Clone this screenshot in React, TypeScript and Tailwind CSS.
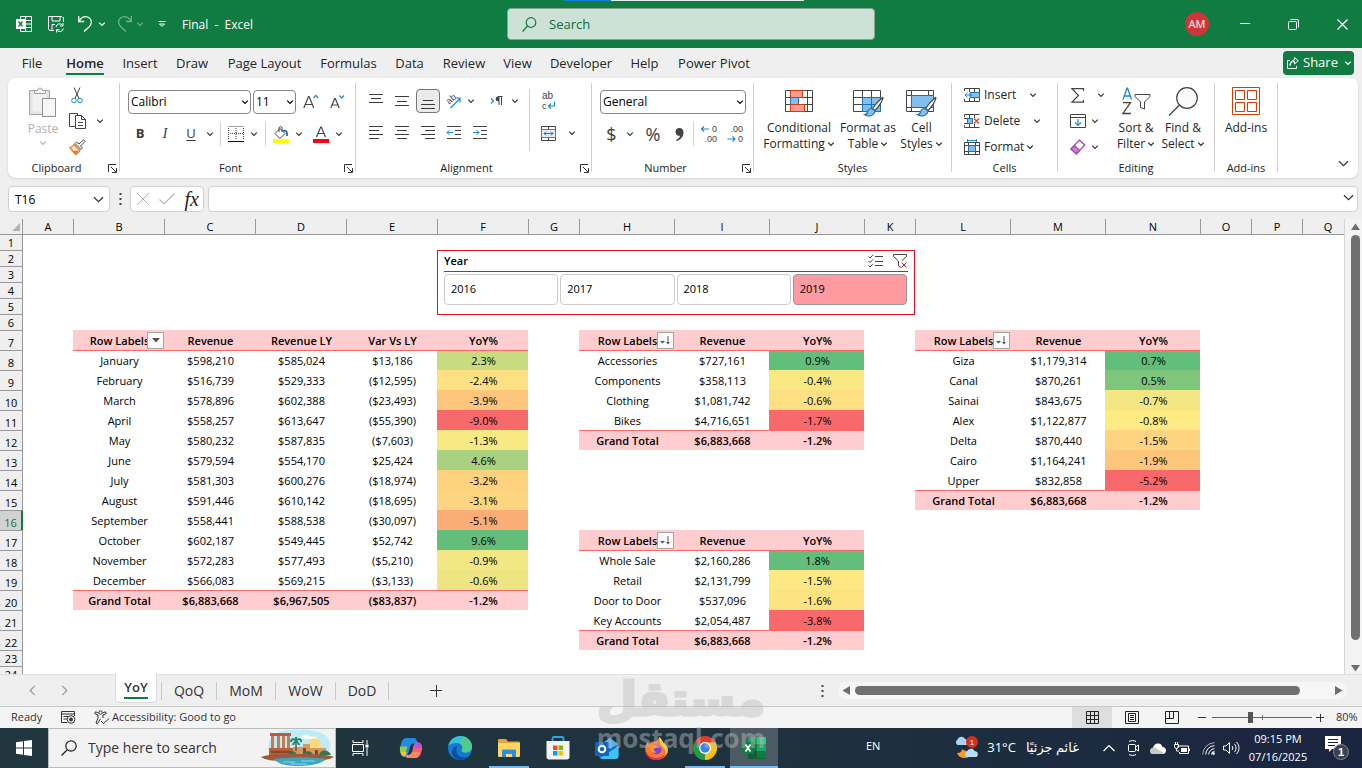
import { ReactNode, useState } from "react";

/* ---------- sheet data ---------- */

type Row = [string, ...string[]];

type Pivot = {
  col: number;
  row: number;
  sorted: boolean;
  head: string[];
  rows: Row[];
  total: string[];
  colors: string[];
};

const COLUMNS = [
  { name: "A", width: 50 },
  { name: "B", width: 91 },
  { name: "C", width: 91 },
  { name: "D", width: 91 },
  { name: "E", width: 91 },
  { name: "F", width: 91 },
  { name: "G", width: 51 },
  { name: "H", width: 95 },
  { name: "I", width: 95 },
  { name: "J", width: 95 },
  { name: "K", width: 51 },
  { name: "L", width: 95 },
  { name: "M", width: 95 },
  { name: "N", width: 95 },
  { name: "O", width: 51 },
  { name: "P", width: 51 },
  { name: "Q", width: 51 },
];

const PIVOTS: Pivot[] = [
  {
    col: 1,
    row: 7,
    sorted: false,
    head: ["Row Labels", "Revenue", "Revenue LY", "Var Vs LY", "YoY%"],
    rows: [
      ["January", "$598,210", "$585,024", "$13,186", "2.3%"],
      ["February", "$516,739", "$529,333", "($12,595)", "-2.4%"],
      ["March", "$578,896", "$602,388", "($23,493)", "-3.9%"],
      ["April", "$558,257", "$613,647", "($55,390)", "-9.0%"],
      ["May", "$580,232", "$587,835", "($7,603)", "-1.3%"],
      ["June", "$579,594", "$554,170", "$25,424", "4.6%"],
      ["July", "$581,303", "$600,276", "($18,974)", "-3.2%"],
      ["August", "$591,446", "$610,142", "($18,695)", "-3.1%"],
      ["September", "$558,441", "$588,538", "($30,097)", "-5.1%"],
      ["October", "$602,187", "$549,445", "$52,742", "9.6%"],
      ["November", "$572,283", "$577,493", "($5,210)", "-0.9%"],
      ["December", "$566,083", "$569,215", "($3,133)", "-0.6%"],
    ],
    total: ["Grand Total", "$6,883,668", "$6,967,505", "($83,837)", "-1.2%"],
    colors: [
      "bg-[#c8db80]",
      "bg-[#fee082]",
      "bg-[#fdc67c]",
      "bg-[#f8696b]",
      "bg-[#f8e983]",
      "bg-[#a8d27f]",
      "bg-[#fdd27f]",
      "bg-[#fdd47f]",
      "bg-[#fbad77]",
      "bg-[#63be7b]",
      "bg-[#f2e783]",
      "bg-[#ece582]",
    ],
  },
  {
    col: 7,
    row: 7,
    sorted: true,
    head: ["Row Labels", "Revenue", "YoY%"],
    rows: [
      ["Accessories", "$727,161", "0.9%"],
      ["Components", "$358,113", "-0.4%"],
      ["Clothing", "$1,081,742", "-0.6%"],
      ["Bikes", "$4,716,651", "-1.7%"],
    ],
    total: ["Grand Total", "$6,883,668", "-1.2%"],
    colors: ["bg-[#63be7b]", "bg-[#f8e983]", "bg-[#fee082]", "bg-[#f8696b]"],
  },
  {
    col: 7,
    row: 17,
    sorted: true,
    head: ["Row Labels", "Revenue", "YoY%"],
    rows: [
      ["Whole Sale", "$2,160,286", "1.8%"],
      ["Retail", "$2,131,799", "-1.5%"],
      ["Door to Door", "$537,096", "-1.6%"],
      ["Key Accounts", "$2,054,487", "-3.8%"],
    ],
    total: ["Grand Total", "$6,883,668", "-1.2%"],
    colors: ["bg-[#63be7b]", "bg-[#fde883]", "bg-[#fee382]", "bg-[#f8696b]"],
  },
  {
    col: 11,
    row: 7,
    sorted: true,
    head: ["Row Labels", "Revenue", "YoY%"],
    rows: [
      ["Giza", "$1,179,314", "0.7%"],
      ["Canal", "$870,261", "0.5%"],
      ["Sainai", "$843,675", "-0.7%"],
      ["Alex", "$1,122,877", "-0.8%"],
      ["Delta", "$870,440", "-1.5%"],
      ["Cairo", "$1,164,241", "-1.9%"],
      ["Upper", "$832,858", "-5.2%"],
    ],
    total: ["Grand Total", "$6,883,668", "-1.2%"],
    colors: [
      "bg-[#63be7b]",
      "bg-[#7fc67d]",
      "bg-[#f2e783]",
      "bg-[#ffeb84]",
      "bg-[#fdd47f]",
      "bg-[#fdc67c]",
      "bg-[#f8696b]",
    ],
  },
];

/* ---------- small shared pieces ---------- */

function Chevron({ className = "", size = 8 }: { className?: string; size?: number }) {
  return (
    <svg width={size} height={size} viewBox="0 0 8 8" fill="none" stroke="currentColor" className={className}>
      <path d="M1.2 2.6 4 5.4 6.8 2.6" strokeWidth="1.2" vectorEffect="non-scaling-stroke" />
    </svg>
  );
}

function Drop({ label, className = "w-3.5" }: { label: string; className?: string }) {
  return (
    <button aria-label={label} className={`h-6 flex items-center justify-center text-[#333] ${className}`}>
      <Chevron />
    </button>
  );
}

function Tool({ label, className = "w-[26px]", children }: { label: string; className?: string; children: ReactNode }) {
  return (
    <button aria-label={label} className={`h-6 flex items-center justify-center text-[#3b3b3b] ${className}`}>
      {children}
    </button>
  );
}

function Group({
  label,
  className,
  launcher = false,
  children,
}: {
  label: string;
  className: string;
  launcher?: boolean;
  children: ReactNode;
}) {
  return (
    <>
      <section aria-label={label} className={`shrink-0 flex flex-col ${className}`}>
        <div className="h-[77px] flex">{children}</div>
        <div className="h-4 flex items-center">
          <span className="flex-1 text-center text-[11px] leading-4 text-[#222]">{label}</span>
          {launcher && (
            <button aria-label={`${label} settings`} className="w-3.5 flex justify-center">
              <svg width="9" height="9" viewBox="0 0 9 9" fill="none" stroke="#333">
                <path d="M.5 8V.5H8M3 3l5 5M8.5 4v4.5H4" />
              </svg>
            </button>
          )}
        </div>
      </section>
      <div className="w-px h-[89px] bg-[#d1d1d1] shrink-0" />
    </>
  );
}

function Lines({ y, x1, x2 }: { y: number[]; x1: number[]; x2: number[] }) {
  return (
    <svg width="16" height="16" viewBox="0 0 16 16" stroke="#3b3b3b" fill="none">
      {y.map((v, i) => (
        <path key={v} d={`M${x1[i]} ${v}H${x2[i]}`} />
      ))}
    </svg>
  );
}

function Combo({ label, value, className }: { label: string; value: string; className: string }) {
  return (
    <div className={`relative h-6 flex items-center ${className}`}>
      <select
        aria-label={label}
        defaultValue={value}
        className="appearance-none w-full h-6 pl-0.5 border border-[#868686] rounded-sm bg-white text-xs text-black"
      >
        <option>{value}</option>
      </select>
      <Chevron className="absolute right-0.5 pointer-events-none" />
    </div>
  );
}

/* ---------- title bar ---------- */

function TitleBar() {
  return (
    <header className="relative h-12 shrink-0 bg-[#107c41] text-white grid grid-cols-[507px_368px_1fr] items-center">
      <div className="absolute top-0 left-[563px] flex h-px">
        <div className="w-12 bg-[#0f7fd8]" />
        <div className="w-[193px] bg-[#dff0e6]" />
      </div>
      <div className="flex items-center pl-4">
        <svg width="16" height="16" viewBox="0 0 16 16" fill="none" stroke="#fff">
          <path d="M4.500 3V.5h11v15h-11V13M9.500.5v15M4.500 4.500h11M9.500 8h6M4.500 11.500h11" />
          <path d="M0 3h9v10H0z" fill="#fff" stroke="none" />
          <path d="m2.500 5.500 4 5M6.500 5.500l-4 5" stroke="#107c41" strokeWidth="1.400" />
        </svg>
        <button aria-label="Save" className="ml-4">
          <svg width="16" height="17" viewBox="0 0 16 17" fill="none" stroke="#fff">
            <path d="M15.500 6V1.500h-1l-1-1H.5v13l1.500 1h4M4 .5v4.500h8V.5M4 14V8.500h3" />
            <path d="M8 11a3.700 3.700 0 0 1 6.800-1.500M15 7v3h-3M15.400 12.500A3.700 3.700 0 0 1 8.700 14M8.500 16.500v-3h3" />
          </svg>
        </button>
        <button aria-label="Undo" className="ml-3.5">
          <svg width="14" height="18" viewBox="0 0 14 18" fill="none" stroke="#fff" strokeWidth="1.300">
            <path d="M.7 1v5.500h5.500M1 6.200C3 3 5.500 1.500 8 1.700c3.500.2 5.500 3 5.300 6-.2 2-1 3-2.300 4.300L6 16.500" />
          </svg>
        </button>
        <button aria-label="Undo list" className="ml-1.5">
          <Chevron />
        </button>
        <button aria-label="Redo" className="ml-3 opacity-40">
          <svg width="14" height="18" viewBox="0 0 14 18" fill="none" stroke="#fff" strokeWidth="1.300">
            <path d="M13.300 1v5.500H7.800M13 6.200C11 3 8.500 1.500 6 1.700c-3.500.2-5.500 3-5.300 6 .2 2 1 3 2.300 4.300l5 4.500" />
          </svg>
        </button>
        <button aria-label="Redo list" className="ml-1 opacity-40">
          <Chevron />
        </button>
        <button aria-label="Customize toolbar" className="ml-3.5">
          <svg width="8" height="8" viewBox="0 0 8 8" fill="none" stroke="#fff">
            <path d="M.5 1.500h7M1.500 4 4 6.500 6.500 4z" />
          </svg>
        </button>
        <h1 className="ml-4 pt-0.5 text-xs whitespace-pre">Final  -  Excel</h1>
      </div>
      <label className="h-8 flex items-center gap-3 px-3.5 rounded-sm border border-[#8aa396] bg-[#cde2d7]">
        <svg width="15" height="15" viewBox="0 0 15 15" fill="none" stroke="#107c41" strokeWidth="1.200">
          <circle cx="9" cy="5.500" r="4.800" />
          <path d="M5.500 9 .5 14.500" />
        </svg>
        <input
          aria-label="Search"
          placeholder="Search"
          className="flex-1 pt-0.5 bg-transparent outline-none text-[13px] text-[#0f6b39] placeholder:text-[#0f6b39]"
        />
      </label>
      <div className="flex items-center justify-end pr-3.5">
        <button className="w-6 h-6 rounded-full bg-[#d13438] text-[11px] leading-6 mr-3">AM</button>
        <button aria-label="Minimize" className="w-12 flex justify-center mr-1">
          <svg width="10" height="10" viewBox="0 0 10 10" stroke="#fff">
            <path d="M0 4.500h10" />
          </svg>
        </button>
        <button aria-label="Restore" className="w-10 flex justify-center">
          <svg width="11" height="11" viewBox="0 0 11 11" fill="none" stroke="#fff">
            <rect x=".5" y="2.500" width="8" height="8" rx="1" />
            <path d="M2.500.5H9A1.500 1.500 0 0 1 10.500 2v6.500" />
          </svg>
        </button>
        <button aria-label="Close" className="ml-6">
          <svg width="11" height="11" viewBox="0 0 11 11" stroke="#fff" strokeWidth="1.200">
            <path d="m.5.5 10 10M10.500.5l-10 10" />
          </svg>
        </button>
      </div>
    </header>
  );
}

/* ---------- ribbon ---------- */

const MENU = [
  { name: "File", className: "w-[46px]" },
  { name: "Home", className: "w-[60px]" },
  { name: "Insert", className: "w-[50px]" },
  { name: "Draw", className: "w-[54px]" },
  { name: "Page Layout", className: "w-[91px]" },
  { name: "Formulas", className: "w-[77px]" },
  { name: "Data", className: "w-[45px]" },
  { name: "Review", className: "w-16" },
  { name: "View", className: "w-[43px]" },
  { name: "Developer", className: "w-[84px]" },
  { name: "Help", className: "w-[43px]" },
  { name: "Power Pivot", className: "w-24" },
];

function MenuBar() {
  return (
    <nav className="h-[30px] shrink-0 flex items-center pl-[9px] pr-2">
      {MENU.map((m) => (
        <button key={m.name} className={`h-[30px] flex justify-center text-[13px] text-[#262626] ${m.className}`}>
          <span
            className={
              m.name === "Home"
                ? "h-[27px] pt-[5px] leading-5 font-semibold border-b-2 border-[#107c41]"
                : "h-[27px] pt-[5px] leading-5"
            }
          >
            {m.name}
          </span>
        </button>
      ))}
      <button className="ml-auto h-6 w-[71px] pl-1 rounded bg-[#107c41] text-white text-[13px] flex items-center gap-1">
        <svg width="12" height="12" viewBox="0 0 12 12" fill="none" stroke="#fff">
          <path d="M3 3.500H.5v8h9V9M3 8.500c.3-2.500 2-4 4.500-4V7L11.300 3.700 7.500.7V3C4.500 3.200 3 5.500 3 8.500z" />
        </svg>
        Share
        <Chevron className="ml-0.5" />
      </button>
    </nav>
  );
}

function Brush() {
  return (
    <g>
      <path d="M29.500 7.500c-2.500 2-8 8-10 11l2.500 2c3-3 7-9 8-12.500z" fill="#fff" stroke="#444" strokeWidth="1.100" />
      <path d="M19 18.500c-2.500-.3-4 1.500-4.500 3.500-.4 1.700-1.500 2.500-3 2.500 3.500 2.500 9.500 2 10.500-3.500z" fill="#83beec" stroke="#1e6fb8" strokeWidth="1.100" />
    </g>
  );
}

function BigButton({ lines, drop = true, className, children }: { lines: string[]; drop?: boolean; className: string; children: ReactNode }) {
  return (
    <button className={`flex flex-col items-center pt-1 text-xs leading-4 text-[#262626] whitespace-nowrap ${className}`}>
      <span className="h-[33px] flex items-start">{children}</span>
      {lines.map((line, i) => (
        <span key={line} className="flex items-center gap-0.5">
          {line}
          {drop && i === lines.length - 1 && <Chevron />}
        </span>
      ))}
    </button>
  );
}

function Ribbon() {
  return (
    <div className="ml-2 mr-1 h-[100px] shrink-0 pt-[5px] bg-white rounded-lg shadow flex overflow-hidden">
      <Group label="Clipboard" className="w-[111px]" launcher>
        <button className="ml-5 w-[30px] flex flex-col items-center pt-1 text-xs leading-4 text-[#b1b1b1]">
          <svg width="28" height="30" viewBox="0 0 28 30" fill="#f1f1f1" stroke="#a6a6a6" className="shrink-0">
            <path d="M.5 3.500h20v24H.5z" fill="#e3e3e3" />
            <path d="M3.500 6.500h14v18h-14z" stroke="none" />
            <path d="M5.500 6.500v-3h3a2.500 2.500 0 0 1 5 0h3v3z" />
            <path d="M13.500 11.500h13v18h-13z" fill="#f7f7f7" stroke="#8f8f8f" />
          </svg>
          <span className="mt-1">Paste</span>
          <Chevron className="mt-0.5" />
        </button>
        <div className="flex flex-col gap-0.5 ml-1.5">
          <Tool label="Cut">
            <svg width="12" height="17" viewBox="0 0 12 17" fill="none">
              <path d="m3 .5 5 11M9 .5l-5 11" stroke="#444" />
              <circle cx="3" cy="13.500" r="2.300" stroke="#1e88d8" />
              <circle cx="9" cy="13.500" r="2.300" stroke="#1e88d8" />
            </svg>
          </Tool>
          <div className="flex">
            <Tool label="Copy">
              <svg width="17" height="16" viewBox="0 0 17 16" fill="none" stroke="#444">
                <path d="M6 13.500H.5V.5h8v2" />
                <path d="M6.500 2.500h6l4 4v9h-10zM12.500 2.500v4h4M9 9.500h5M9 12.500h5" fill="#fff" />
              </svg>
            </Tool>
            <Drop label="Copy list" className="w-5" />
          </div>
          <Tool label="Format Painter">
            <svg width="17" height="16" viewBox="0 0 17 16" fill="none">
              <path d="m5 5.500 6 6c-1 2-2.500 3-4.500 4L.8 8.500C2.500 8 4 7 5 5.500z" fill="#fbe3cf" stroke="#e07a1f" strokeWidth="1.200" />
              <path d="M4 12 10 11.500l-3.500 3.700z" fill="#e07a1f" />
              <path d="m6 4.500 6 6 1.500-1.500-2-2 4.500-4.500-1.500-1.700L10 5 7.500 3z" fill="#fff" stroke="#444" />
            </svg>
          </Tool>
        </div>
      </Group>

      <Group label="Font" className="w-[235px]" launcher>
        <div className="flex flex-col gap-2 pl-2 pt-[7px]">
          <div className="flex">
            <Combo label="Font name" value="Calibri" className="w-[123px] mr-0.5" />
            <Combo label="Font size" value="11" className="w-[43px] mr-0.5" />
            <Tool label="Increase font size">
              <svg width="16" height="16" viewBox="0 0 16 16" fill="none">
                <path d="M.8 14 5.500 2.500h.6L10.800 14M2.500 10.500h6.700" stroke="#444" strokeWidth="1.200" />
                <path d="m10.500 4 2.200-2.500L15 4" stroke="#1e88d8" strokeWidth="1.200" />
              </svg>
            </Tool>
            <Tool label="Decrease font size">
              <svg width="16" height="16" viewBox="0 0 16 16" fill="none">
                <path d="M1.800 14 5.700 4.500h.6L10.200 14M3 11h6" stroke="#444" strokeWidth="1.200" />
                <path d="m10.500 1.500 2.200 2.500L15 1.500" stroke="#1e88d8" strokeWidth="1.200" />
              </svg>
            </Tool>
          </div>
          <div className="flex items-center">
            <Tool label="Bold" className="w-6">
              <b className="text-[13px]">B</b>
            </Tool>
            <Tool label="Italic">
              <i className="text-sm font-['Liberation_Serif',serif]">I</i>
            </Tool>
            <Tool label="Underline">
              <u className="text-[13px] underline-offset-2">U</u>
            </Tool>
            <Drop label="Underline styles" className="w-3" />
            <div className="w-px h-6 mx-1 bg-[#d1d1d1]" />
            <Tool label="Borders" className="w-[22px]">
              <svg width="16" height="16" viewBox="0 0 16 16" stroke="#444" fill="none">
                <path d="M.5.5h15M.5 2v12M15.500 2v12M8 2v12M2 7.500h13" strokeDasharray="1 1" />
                <path d="M0 15.500h16" stroke="#111" />
              </svg>
            </Tool>
            <Drop label="Border styles" />
            <div className="w-px h-6 mx-1 bg-[#d1d1d1]" />
            <Tool label="Fill color" className="w-[22px]">
              <svg width="16" height="17" viewBox="0 0 16 17" fill="none">
                <path d="m7 2.500 5 5-5 5-5-5z" stroke="#444" />
                <path d="M6 6V2.200a1.500 1.500 0 0 1 3 0V6" stroke="#444" />
                <path d="M10 5c3-1 4.500.5 4 5" stroke="#1e6fb8" strokeWidth="1.800" />
                <path d="M0 13h16v4H0z" fill="#ff0" />
              </svg>
            </Tool>
            <Drop label="Fill colors" />
            <Tool label="Font color" className="w-[22px] ml-1">
              <svg width="16" height="17" viewBox="0 0 16 17" fill="none">
                <path d="M3.500 11 7.700 1h.6l4.200 10M5 7.500h6" stroke="#444" strokeWidth="1.200" />
                <path d="M0 13h16v4H0z" fill="#fb0013" />
              </svg>
            </Tool>
            <Drop label="Font colors" />
          </div>
        </div>
      </Group>

      <Group label="Alignment" className="w-[235px]" launcher>
        <div className="w-[173px] flex flex-col gap-2 pl-[7px] pt-1.5">
          <div className="flex">
            <Tool label="Top align">
              <Lines y={[1.5, 5.5, 9.5]} x1={[1, 3, 1]} x2={[15, 13, 15]} />
            </Tool>
            <Tool label="Middle align">
              <Lines y={[3.5, 8.5, 12.5]} x1={[1, 3, 1]} x2={[15, 13, 15]} />
            </Tool>
            <Tool label="Bottom align" className="w-6 mx-px rounded border border-[#767676] bg-[#ebebeb]">
              <Lines y={[7.5, 11.5, 15.5]} x1={[3, 1, 1]} x2={[13, 15, 15]} />
            </Tool>
            <Tool label="Orientation" className="w-6">
              <svg width="20" height="20" viewBox="0 0 20 20" fill="none" fontFamily="Liberation Sans, sans-serif">
                <text x="3" y="11" fontSize="9" fill="#444" transform="rotate(-40 8 8)">
                  ab
                </text>
                <path d="M7.500 17 17 7.500M12.500 7H17v4.500" stroke="#1e88d8" strokeWidth="1.200" />
              </svg>
            </Tool>
            <Drop label="Orientations" className="w-3" />
            <Tool label="Text direction" className="w-[22px] ml-2">
              <svg width="13" height="12" viewBox="0 0 13 12" fill="none">
                <path d="m1 3.500 2.500 2.500L1 8.500" stroke="#1e88d8" strokeWidth="1.300" />
                <path d="M9 1.500H8a2.300 2.300 0 0 0 0 4.800h1z" fill="#444" />
                <path d="M8 1.500h4.500M9 1.500V10M11.500 1.500V10" stroke="#444" />
              </svg>
            </Tool>
            <Drop label="Text directions" className="w-4" />
          </div>
          <div className="flex">
            <Tool label="Align left">
              <Lines y={[1.5, 5.5, 9.5, 13.5]} x1={[1, 1, 1, 1]} x2={[15, 11, 15, 11]} />
            </Tool>
            <Tool label="Center">
              <Lines y={[1.5, 5.5, 9.5, 13.5]} x1={[1, 3, 1, 3]} x2={[15, 13, 15, 13]} />
            </Tool>
            <Tool label="Align right">
              <Lines y={[1.5, 5.5, 9.5, 13.5]} x1={[1, 5, 1, 5]} x2={[15, 15, 15, 15]} />
            </Tool>
            <Tool label="Decrease indent">
              <svg width="16" height="16" viewBox="0 0 16 16" fill="none" stroke="#444">
                <path d="M1 1.500h14M9 5.500h6M9 9.500h6M1 13.500h14" />
                <path d="M7 7.500H1M3.500 5 1 7.500 3.500 10" stroke="#1e88d8" />
              </svg>
            </Tool>
            <Tool label="Increase indent">
              <svg width="16" height="16" viewBox="0 0 16 16" fill="none" stroke="#444">
                <path d="M1 1.500h14M9 5.500h6M9 9.500h6M1 13.500h14" />
                <path d="M1 7.500h6M4.500 5 7 7.500 4.500 10" stroke="#1e88d8" />
              </svg>
            </Tool>
          </div>
        </div>
        <div className="w-px h-[62px] mt-1.5 bg-[#d1d1d1]" />
        <div className="flex flex-col gap-2 pl-1.5 pt-1.5">
          <Tool label="Wrap text">
            <svg width="16" height="22" viewBox="0 0 16 22" fill="none" fontFamily="Liberation Sans, sans-serif">
              <text x="1" y="9" fontSize="10" fill="#444">
                ab
              </text>
              <text x="1" y="19" fontSize="9" fill="#444">
                c
              </text>
              <path d="M13.500 11.500v4.500H7.500M10 13.500 7.500 16l2.500 2.500" stroke="#1e88d8" strokeWidth="1.200" />
            </svg>
          </Tool>
          <div className="flex">
            <Tool label="Merge and center" className="w-6">
              <svg width="15" height="15" viewBox="0 0 15 15" fill="none" stroke="#444">
                <path d="M.5.5h14v14H.5zM7.500.5v3M7.500 11.500v3" />
                <path d="M.5 3.500h14v8H.5z" fill="#e4f1fb" stroke="#1e88d8" />
                <path d="M3 7.500h9M5 5.500l-2 2 2 2M10 5.500l2 2-2 2" stroke="#1e6fb8" />
              </svg>
            </Tool>
            <Drop label="Merge list" className="w-6" />
          </div>
        </div>
      </Group>

      <Group label="Number" className="w-[161px]" launcher>
        <div className="flex flex-col gap-2 pl-2 pt-[7px]">
          <Combo label="Number format" value="General" className="w-[146px]" />
          <div className="flex items-center">
            <Tool label="Currency" className="w-[23px] text-lg">
              $
            </Tool>
            <Drop label="Currencies" />
            <Tool label="Percent" className="w-8 text-lg">
              %
            </Tool>
            <Tool label="Comma style" className="w-5">
              <svg width="9" height="13" viewBox="0 0 9 13">
                <path d="M4.500 0a4 4 0 0 1 4 4.200C8.500 8.500 6 11.500 1.500 13L1 12c2.500-1.200 3.800-2.800 4-4.300A3.800 3.800 0 0 1 .5 4 4 4 0 0 1 4.500 0z" fill="#444" />
              </svg>
            </Tool>
            <div className="w-px h-6 ml-1 mr-1 bg-[#d1d1d1]" />
            <Tool label="Increase decimal" className="w-[22px]">
              <svg width="18" height="22" viewBox="0 0 18 22" fill="none" fontFamily="Liberation Sans, sans-serif">
                <text x="17" y="9" fontSize="9" fill="#444" textAnchor="end">
                  0
                </text>
                <text x="17" y="19" fontSize="9" fill="#444" textAnchor="end">
                  .00
                </text>
                <path d="M9 6H1.500M4 3.500 1.500 6 4 8.500" stroke="#1e88d8" strokeWidth="1.200" />
              </svg>
            </Tool>
            <Tool label="Decrease decimal" className="w-[22px] ml-1">
              <svg width="18" height="22" viewBox="0 0 18 22" fill="none" fontFamily="Liberation Sans, sans-serif">
                <text x="17" y="9" fontSize="9" fill="#444" textAnchor="end">
                  .00
                </text>
                <text x="17" y="19" fontSize="9" fill="#444" textAnchor="end">
                  0
                </text>
                <path d="M1.500 16H9M6.500 13.500 9 16l-2.500 2.500" stroke="#1e88d8" strokeWidth="1.200" />
              </svg>
            </Tool>
          </div>
        </div>
      </Group>

      <Group label="Styles" className="w-[197px]">
        <BigButton lines={["Conditional", "Formatting"]} className="w-[90px]">
          <svg width="28" height="25" viewBox="0 0 28 25" fill="none" stroke="#444" className="mt-[3px]">
            <path d="M.5.5h27v21H.5zM.5 7.500h27M.5 14.500h27M5.500.5v21M22.500.5v21" />
            <path d="M5.500.5h12v7h-12z" fill="#ff9a98" stroke="#d83b01" />
            <path d="M5.500 7.500h8v7h-8z" fill="#83beec" stroke="#1e6fb8" />
            <path d="M5.500 14.500h14v7h-14z" fill="#ff9a98" stroke="#d83b01" />
          </svg>
        </BigButton>
        <BigButton lines={["Format as", "Table"]} className="w-12">
          <svg width="31" height="30" viewBox="0 0 31 30" fill="none" stroke="#444" className="mt-[3px]">
            <path d="M.5.5h27v21H.5zM.5 7.500h27M.5 14.500h27M9.500.5v21M18.500.5v21" />
            <path d="M9.500 7.500h18v14h-18z" fill="#83beec" stroke="none" />
            <path d="M9.500 14.500h18M18.500 7.500v14M9.500 7.500h18v14h-18z" stroke="#1e6fb8" />
            <Brush />
          </svg>
        </BigButton>
        <BigButton lines={["Cell", "Styles"]} className="w-[59px]">
          <svg width="31" height="30" viewBox="0 0 31 30" fill="none" stroke="#444" className="mt-[3px]">
            <path d="M.5.5h27v21H.5zM.5 5.500h27M5.500.5v21M.5 17.500h27M22.500.5v21" />
            <path d="M5.500 5.500h22v12h-22z" fill="#83beec" stroke="#1e6fb8" />
            <Brush />
          </svg>
        </BigButton>
      </Group>

      <Group label="Cells" className="w-[105px]">
        <div className="flex flex-col gap-0.5 pl-3 text-xs text-[#262626]">
          <div className="flex">
            <button className="h-6 flex items-center gap-1 w-[62px]">
              <svg width="16" height="14" viewBox="0 0 16 14" fill="none" stroke="#444" className="shrink-0">
                <path d="M.5 3V.5h15v13H.5V11M5.500.5V4M10.500.5V4M5.500 10v3.500M10.500 10v3.500" />
                <path d="M6 4.500h9.500v5H6z" fill="#83beec" stroke="#1e6fb8" />
                <path d="M8 7H1M3.500 4.500 1 7l2.500 2.500" stroke="#1e88d8" />
              </svg>
              Insert
            </button>
            <Drop label="Insert list" />
          </div>
          <div className="flex">
            <button className="h-6 flex items-center gap-1 w-[66px]">
              <svg width="16" height="14" viewBox="0 0 16 14" fill="none" stroke="#444" className="shrink-0">
                <path d="M.5 3V.5h15M.5 13.500h15M.5 11v2.500M5.500.5V4M10.500.5V4M5.500 10v3.500M10.500 10v3.500M0 4.500h4M0 9.500h4" />
                <path d="M3.500 4.500h5v5h-5z" fill="#83beec" stroke="#1e6fb8" />
                <path d="m10 4.500 5 5M15 4.500l-5 5" stroke="#e03a2e" strokeWidth="1.200" />
              </svg>
              Delete
            </button>
            <Drop label="Delete list" />
          </div>
          <button className="h-6 flex items-center gap-1">
            <svg width="16" height="16" viewBox="0 0 16 16" fill="none" stroke="#444" className="shrink-0">
              <path d="M.5 3.500h15v12H.5zM4.500 3.500v12M11.500 3.500v12M.5 6.500h15M.5 12.500h15" />
              <path d="M4.500 6.500h7v6h-7z" fill="#83beec" stroke="#1e6fb8" />
              <path d="M3.500 1.500h9M3.500 0v3M12.500 0v3" stroke="#1e88d8" />
            </svg>
            <span className="-mr-1">Format</span>
            <Chevron className="ml-0.5" />
          </button>
        </div>
      </Group>

      <Group label="Editing" className="w-[156px]">
        <div className="flex flex-col gap-0.5 pl-2">
          <div className="flex">
            <Tool label="AutoSum" className="w-6">
              <svg width="14" height="15" viewBox="0 0 14 15" fill="none" stroke="#444" strokeWidth="1.200">
                <path d="M12.500 3V.7H1l6.500 6.800L1 14.200h11.500V12" />
              </svg>
            </Tool>
            <Drop label="AutoSum list" className="w-[22px]" />
          </div>
          <div className="flex">
            <Tool label="Fill" className="w-6">
              <svg width="16" height="14" viewBox="0 0 16 14" fill="none" stroke="#444">
                <path d="M.5.5h15v13H.5zM.5 3.500h15" />
                <path d="M8 5v6.500M5 8.500l3 3 3-3" stroke="#1e88d8" strokeWidth="1.200" />
              </svg>
            </Tool>
            <Drop label="Fill list" className="w-2.5" />
          </div>
          <div className="flex">
            <Tool label="Clear" className="w-6">
              <svg width="16" height="16" viewBox="0 0 16 16" fill="#fff" stroke="#a33fae" strokeWidth="1.200">
                <path d="M1 10 9.500 1.200 14.800 6l-8.500 9z" />
                <path d="M1 10l3.500-3.500 5.200 5L6.300 15z" fill="#c97fd0" />
              </svg>
            </Tool>
            <Drop label="Clear list" className="w-2.5" />
          </div>
        </div>
        <BigButton lines={["Sort &", "Filter"]} className="w-12">
          <svg width="29" height="28" viewBox="0 0 29 28" fill="none" strokeWidth="1.300">
            <path d="M1 12.500 5 1.200h.6l4 11.300M2.500 9h5.800" stroke="#1e88d8" />
            <path d="M1 15.700h7.500L1 26.500h8" stroke="#444" />
            <path d="M13 7.500h15v2L22.500 15v7l-4-1.500V15L13 9.500z" stroke="#444" strokeWidth="1" />
          </svg>
        </BigButton>
        <BigButton lines={["Find &", "Select"]} className="w-[46px]">
          <svg width="30" height="30" viewBox="0 0 30 30" fill="#fafafa" stroke="#444" strokeWidth="1.200">
            <circle cx="19" cy="11" r="10.300" />
            <path d="M11.500 18 1 28.500" />
          </svg>
        </BigButton>
      </Group>

      <Group label="Add-ins" className="w-[62px]">
        <BigButton lines={["Add-ins"]} drop={false} className="w-[62px]">
          <svg width="28" height="28" viewBox="0 0 28 28" fill="none" stroke="#d83b01">
            <path d="M.5.500h27v27H.5zM3.500 3.500h9v9h-9zM15.500 3.500h9v9h-9zM3.500 15.500h9v9h-9zM15.500 15.500h9v9h-9z" />
          </svg>
        </BigButton>
      </Group>

      <button aria-label="Collapse ribbon" className="ml-auto mr-2 mb-2 self-end text-[#333]">
        <Chevron size={13} />
      </button>
    </div>
  );
}

/* ---------- formula bar ---------- */

function FormulaBar() {
  return (
    <div className="mt-2 ml-2 mr-1 h-[26px] shrink-0 flex">
      <div className="w-[102px] flex items-center justify-between pr-1 bg-white border border-[#d1d1d1] rounded">
        <input aria-label="Name box" defaultValue="T16" className="w-20 pl-1.5 pt-0.5 outline-none text-xs" />
        <Chevron size={13} className="text-[#333]" />
      </div>
      <div className="w-5 flex items-center justify-center">
        <svg width="3" height="12" viewBox="0 0 3 12" fill="#444">
          <path d="M.5 0h2v2h-2zM.5 5h2v2h-2zM.5 10h2v2h-2z" />
        </svg>
      </div>
      <div className="w-[74px] flex items-center justify-between pl-1.5 pr-1 bg-white border border-[#d1d1d1] rounded">
        <button aria-label="Cancel">
          <svg width="12" height="12" viewBox="0 0 12 12" stroke="#b5b5b5">
            <path d="m0 0 12 12M12 0 0 12" />
          </svg>
        </button>
        <button aria-label="Enter">
          <svg width="16" height="12" viewBox="0 0 16 12" fill="none" stroke="#b5b5b5" strokeWidth="1.200">
            <path d="m.5 6.500 4.500 4.500L15.500.5" />
          </svg>
        </button>
        <button aria-label="Insert function" className="font-['Liberation_Serif',serif] italic text-xl leading-5 text-[#222]">
          fx
        </button>
      </div>
      <div className="ml-1 flex-1 flex items-center bg-white border border-[#d1d1d1] rounded">
        <input aria-label="Formula" className="flex-1 pl-2 outline-none text-xs" />
        <Chevron size={13} className="mr-0.5 mb-1 text-[#333]" />
      </div>
    </div>
  );
}

/* ---------- sheet ---------- */

function FilterButton({ sorted }: { sorted: boolean }) {
  return (
    <button aria-label="Filter rows" className="absolute right-0 top-0.5 w-[17px] h-[17px] border border-[#a6a6a6] bg-[#fafafa] flex items-center justify-center">
      {sorted ? (
        <svg width="11" height="9" viewBox="0 0 11 9" fill="#555">
          <path d="M0 5h5L2.500 7.500zM7.500 0h1v6h1.500L8 8.500 6 6h1.500z" />
        </svg>
      ) : (
        <svg width="8" height="5" viewBox="0 0 8 5" fill="#555">
          <path d="M0 0h8L4 4.500z" />
        </svg>
      )}
    </button>
  );
}

function Cell({ row, col }: { row: number; col: number }) {
  const pivot = PIVOTS.find(
    (p) => col >= p.col && col < p.col + p.head.length && row >= p.row && row <= p.row + p.rows.length + 1
  );
  if (!pivot) return <td className={row === 1 ? "border-t border-[#999]" : ""} />;

  const c = col - pivot.col;
  const r = row - pivot.row - 1;

  if (r === -1) {
    return (
      <td className="relative p-0 pl-0.5 bg-[#ffcccf] text-center font-semibold">
        {pivot.head[c]}
        {c === 0 && <FilterButton sorted={pivot.sorted} />}
      </td>
    );
  }
  if (r === pivot.rows.length) {
    return (
      <td className="p-0 pl-0.5 border-t border-[#f8696b] bg-[#ffcccf] text-center font-semibold">{pivot.total[c]}</td>
    );
  }

  const last = c === pivot.head.length - 1;
  return (
    <td className={`p-0 pl-0.5 text-center ${r === 0 ? "border-t border-[#f8696b]" : ""} ${last ? pivot.colors[r] : ""}`}>
      {pivot.rows[r][c]}
    </td>
  );
}

function Slicer() {
  const [year, setYear] = useState("2019");
  return (
    <div className="absolute left-[437px] top-[31px] w-[478px] h-[65px] px-1.5 bg-white border border-[#e81123]">
      <div className="h-[21px] flex items-center border-b border-[#e81123] text-[11px]">
        <span className="flex-1 font-semibold">Year</span>
        <button aria-label="Multi-select" className="mr-2.5">
          <svg width="15" height="14" viewBox="0 0 15 14" fill="none" stroke="#444">
            <path d="M7 2.500h8M7 7.500h8M7 11.500h8M.5 2.500 2 4 5 .8M.5 7 2 8.500 5 5.300M.5 11.500 2 13l3-3.200" />
          </svg>
        </button>
        <button aria-label="Clear filter">
          <svg width="15" height="15" viewBox="0 0 15 15" fill="none" stroke="#444">
            <path d="M8 13.500 5.500 12V7L.5 2.500v-2h13v2L9 6.500" />
            <path d="m8.500 8.500 5 5M13.500 8.500l-5 5" stroke="#e81123" />
          </svg>
        </button>
      </div>
      <div className="grid grid-cols-4 gap-0.5 mt-0.5 mr-px">
        {["2016", "2017", "2018", "2019"].map((y) => (
          <button
            key={y}
            onClick={() => setYear(y)}
            className={`h-[31px] pl-1.5 text-left text-[11px] rounded-sm border ${
              y === year ? "bg-[#ff9aa0] border-[#999]" : "bg-white border-[#ccc]"
            }`}
          >
            {y}
          </button>
        ))}
      </div>
    </div>
  );
}

function Sheet() {
  const rows = Array.from({ length: 24 }, (_, i) => i + 1);
  return (
    <div className="flex-1 min-h-0 mt-[7px] flex">
      <div className="relative flex-1 min-w-0 overflow-hidden bg-white border-r border-[#d6d6d6]">
        <table className="table-fixed w-0 border-separate border-spacing-0 text-[11px] leading-[15px] text-black">
          <colgroup>
            <col style={{ width: 23 }} />
            {COLUMNS.map((c) => (
              <col key={c.name} style={{ width: c.width }} />
            ))}
          </colgroup>
          <thead>
            <tr className="h-[15px] bg-[#efefef]">
              <th aria-label="Select all" className="p-0 border-r border-[#999]">
                <svg width="8" height="8" viewBox="0 0 8 8" className="ml-3">
                  <path d="M8 0v8H0z" fill="#b4b4b4" />
                </svg>
              </th>
              {COLUMNS.map((c, i) => (
                <th key={c.name} className={`p-0 font-normal border-[#999] ${i ? "border-l" : ""}`}>
                  {c.name}
                </th>
              ))}
            </tr>
          </thead>
          <tbody>
            {rows.map((r) => (
              <tr key={r} className={r < 7 || r > 22 ? "h-4" : "h-5"}>
                <th
                  className={`p-0 font-normal align-bottom border-t ${
                    r === 16
                      ? "bg-[#d2d2d2] text-[#0f703b] border-t-[#999] border-r-2 border-r-[#107c41]"
                      : "bg-[#efefef] border-t-[#999] border-r border-r-[#999]"
                  }`}
                >
                  {r}
                </th>
                {COLUMNS.map((c, i) => (
                  <Cell key={c.name} row={r} col={i} />
                ))}
              </tr>
            ))}
          </tbody>
        </table>
        <Slicer />
      </div>
      <div className="w-[17px] shrink-0 bg-[#f3f3f3] flex flex-col items-center pl-1 pt-1">
        <button aria-label="Scroll up">
          <svg width="9" height="8" viewBox="0 0 9 8" className="mb-1">
            <path d="M4.500.5 9 7H0z" fill="#6e6e6e" />
          </svg>
        </button>
        <div className="w-[9px] flex-1 rounded-full bg-[#707070]" />
        <button aria-label="Scroll down" className="pt-6 pb-0.5">
          <svg width="9" height="8" viewBox="0 0 9 8">
            <path d="M0 1h9L4.500 7.500z" fill="#6e6e6e" />
          </svg>
        </button>
      </div>
    </div>
  );
}

/* ---------- sheet tabs and status bar ---------- */

const TABS = [
  { name: "QoQ", className: "w-[54px]" },
  { name: "MoM", className: "w-[58px]" },
  { name: "WoW", className: "w-[59px]" },
  { name: "DoD", className: "w-[52px]" },
];

function SheetTabs() {
  return (
    <div className="h-8 shrink-0 flex items-center border-t border-[#e0e0e0] text-sm text-[#333]">
      <button aria-label="Previous sheet" className="ml-6 w-4 flex justify-center text-[#999]">
        <Chevron size={13} className="rotate-90" />
      </button>
      <button aria-label="Next sheet" className="ml-4 w-4 flex justify-center text-[#999]">
        <Chevron size={13} className="-rotate-90" />
      </button>
      <button className="ml-[43px] mr-1 -mt-px self-start h-[29px] w-[42px] flex justify-center bg-white rounded-b border-x border-b border-[#dcdcdc]">
        <span className="h-[25px] pt-[3px] leading-5 text-[13px] font-semibold border-b-2 border-[#107c41]">YoY</span>
      </button>
      {TABS.map((t) => (
        <div key={t.name} className="flex items-center">
          <div className="w-px h-[18px] bg-[#c8c8c8]" />
          <button className={t.className}>{t.name}</button>
        </div>
      ))}
      <div className="w-px h-[18px] bg-[#c8c8c8]" />
      <button aria-label="New sheet" className="ml-[41px]">
        <svg width="12" height="12" viewBox="0 0 12 12" stroke="#333">
          <path d="M0 5.500h12M6.500 0v12" />
        </svg>
      </button>
      <svg width="3" height="12" viewBox="0 0 3 12" fill="#444" className="ml-auto mr-[14px]">
        <path d="M.5 0h2v2h-2zM.5 5h2v2h-2zM.5 10h2v2h-2z" />
      </svg>
      <div className="w-[509px] mr-[15px] h-[17px] px-1 flex items-center justify-between rounded-full bg-[#f6f6f6]">
        <button aria-label="Scroll left">
          <svg width="8" height="9" viewBox="0 0 8 9">
            <path d="M8 0v9L.5 4.500z" fill="#6e6e6e" />
          </svg>
        </button>
        <div className="w-[445px] h-[9px] ml-[5px] mr-auto rounded-full bg-[#707070]" />
        <button aria-label="Scroll right">
          <svg width="8" height="9" viewBox="0 0 8 9">
            <path d="M0 0v9l7.500-4.500z" fill="#6e6e6e" />
          </svg>
        </button>
      </div>
    </div>
  );
}

function StatusBar() {
  return (
    <div className="h-[22px] shrink-0 flex items-center bg-[#f4f4f4] border-t border-[#c6c6c6] text-[11px] text-[#333]">
      <span className="w-[51px] pl-[11px] mr-2.5">Ready</span>
      <svg width="15" height="13" viewBox="0 0 15 13" fill="none" stroke="#333">
        <path d="M6 11.500H.5V.5h13V5M.5 3h13M2.500 5.500H7M2.500 8H6" />
        <circle cx="10" cy="8.500" r="3.800" />
        <circle cx="10" cy="8.500" r="1.500" fill="#333" />
      </svg>
      <svg width="16" height="15" viewBox="0 0 16 15" fill="none" stroke="#333" className="ml-[18px]">
        <circle cx="6.500" cy="2.500" r="1.700" />
        <path d="M4.500 3 1.500 1.800.7 3.500 4 5v3l-2 5 1.500.7 3-5M8.500 3l3-1.200.8 1.700L9 5v3M7 11l2.500 2.500L15 8.500" />
      </svg>
      <span className="ml-0.5">Accessibility: Good to go</span>
      <button aria-label="Normal view" className="ml-auto w-10 h-[21px] flex items-center justify-center bg-[#dedede]">
        <svg width="13" height="13" viewBox="0 0 13 13" fill="none" stroke="#222">
          <path d="M.5.5h12v12H.5zM4.500.5v12M8.500.5v12M.5 4.500h12M.5 8.500h12" />
        </svg>
      </button>
      <button aria-label="Page layout view" className="w-10 h-[21px] flex items-center justify-center">
        <svg width="14" height="13" viewBox="0 0 14 13" fill="none" stroke="#222">
          <path d="M.5.5h13v12H.5zM3.500 2.500h7v8h-7zM5 4.500h4M5 6.500h4M5 8.500h4" />
        </svg>
      </button>
      <button aria-label="Page break view" className="w-10 h-[21px] flex items-center justify-center">
        <svg width="14" height="13" viewBox="0 0 14 13" fill="none" stroke="#222">
          <path d="M.5.5h13v12H.5zM.5 7.500h8M4.500.5v7M8.500.5v7" />
        </svg>
      </button>
      <button aria-label="Zoom out" className="ml-1.5 mr-1.5">
        <svg width="8" height="8" viewBox="0 0 8 8" stroke="#333">
          <path d="M0 3.500h8" />
        </svg>
      </button>
      <div className="relative w-[100px] h-4 flex items-center">
        <input
          type="range"
          aria-label="Zoom"
          defaultValue={38}
          className="w-full h-px appearance-none bg-[#666] [&::-webkit-slider-thumb]:appearance-none [&::-webkit-slider-thumb]:w-[5px] [&::-webkit-slider-thumb]:h-[11px] [&::-webkit-slider-thumb]:bg-[#555]"
        />
        <div className="absolute left-1/2 w-px h-[5px] bg-[#666]" />
      </div>
      <button aria-label="Zoom in" className="ml-1">
        <svg width="8" height="8" viewBox="0 0 8 8" stroke="#333">
          <path d="M0 3.500h8M4.500 0v8" />
        </svg>
      </button>
      <span className="ml-3 w-[26px]">80%</span>
    </div>
  );
}

/* ---------- taskbar ---------- */

function App48({ label, open = "", children }: { label: string; open?: string; children: ReactNode }) {
  return (
    <button aria-label={label} className={`relative w-12 ml-px h-10 flex items-center justify-center ${open === "active" ? "bg-white/20" : ""}`}>
      {children}
      {open && (
        <span className={`absolute bottom-0 h-0.5 bg-[#76b9ed] ${open === "active" ? "inset-x-0" : "inset-x-1"}`} />
      )}
    </button>
  );
}

function Temple() {
  return (
    <svg width="74" height="38" viewBox="0 0 74 38">
      <path d="M8 14C10 3 22 0 38 1c16-1 30 4 31 13 1 6-2 12-5 14H10c-3-3-3-8-2-14z" fill="#bfeaf7" />
      <path d="M40 8c4-4 8-2 9 0 4-1 7 0 8 2H40zM12 4c3-2 6-1 7 1h-8z" fill="#fff" />
      <circle cx="54" cy="15" r="6" fill="#ffd978" />
      <path d="M9 4h21v3H9z" fill="#b5603a" />
      <path d="M10 7h3v14h-3zM16 7h3v14h-3zM21 7h3v14h-3zM26 7h3v14h-3z" fill="#c97a50" />
      <path d="M8 19h25v8H8z" fill="#b5603a" />
      <path d="M10 22h21v2H10z" fill="#8d4327" />
      <path d="M32 18h12v8H32zM42 15h7v11h-7zM49 19h16v7H49z" fill="#d39a5e" />
      <path d="M42 19h3v6h-3zM54 21h3v5h-3z" fill="#8d4327" />
      <path d="M35 12v10" stroke="#7a4a22" strokeWidth="1.500" />
      <path d="M35 12c-2-3-5-2-5 1M35 12c2-3 6-2 5 1M35 12c-1 1-3 2-3 4M35 12c1 1 3 2 3 4M35 12V8" stroke="#1d8a70" strokeWidth="2" fill="none" />
      <path d="M27 26c1-5 8-5 9 0zM42 26c1-5 9-5 10 0zM58 26c1-6 10-6 12 0z" fill="#2f7a4d" />
      <path d="M0 28c8-3 20-3 34-3s32 0 39 3c-5 3-14 4-24 4H22C12 32 4 31 0 28z" fill="#9a5a3c" />
      <path d="M13 30c14-2 40-2 52 0-3 4-14 7-28 7S16 34 13 30z" fill="#3fa5bf" />
      <path d="M22 33h12M40 32h14M30 35h16" stroke="#8fdbe8" />
    </svg>
  );
}

function Taskbar() {
  return (
    <footer className="h-10 shrink-0 flex items-center text-white bg-linear-to-r from-[#20373f] via-[#1f333e] to-[#1a2540]">
      <button aria-label="Start" className="w-12 flex justify-center">
        <svg width="16" height="16" viewBox="0 0 16 16" fill="#fff">
          <path d="m0 2.300 7-1v6.200H0zM8 1.100 16 0v7.500H8zM0 8.500h7v6.200l-7-1zM8 8.500h8V16l-8-1.100z" />
        </svg>
      </button>
      <label className="w-72 h-10 flex items-center pl-3 bg-[#f2f2f2] border border-[#b8bcbe]">
        <svg width="16" height="16" viewBox="0 0 16 16" fill="none" stroke="#222" strokeWidth="1.200">
          <circle cx="10" cy="6" r="5.200" />
          <path d="M6 10 .5 15.500" />
        </svg>
        <input
          aria-label="Type here to search"
          placeholder="Type here to search"
          className="flex-1 min-w-0 ml-[11px] bg-transparent outline-none text-sm placeholder:text-[#333]"
        />
        <Temple />
      </label>
      <button aria-label="Task view" className="w-12 mr-0.5 flex justify-center">
        <svg width="17" height="16" viewBox="0 0 17 16" fill="none" stroke="#fff">
          <path d="M1 0v2.500h10V0M1 16v-2.500h10V16M.5 4.500h11v7H.5zM15 0v4M15 8v8" />
          <path d="M13.500 4.500h3v3h-3z" fill="#fff" stroke="none" />
        </svg>
      </button>
      <App48 label="Copilot">
        <svg width="24" height="22" viewBox="0 0 24 22">
          <path d="M8 1h7c2 0 2.500 1.500 3 3l.7 2.500h-4c-2 0-3 1-3.500 3L9 17c-.5 2-1.500 3-4 3-1.500 0-2.500-1-3-3C1 13.500.5 11 2 7c1-4 2.500-6 6-6z" fill="#1f8ce0" />
          <path d="M1.200 9.500h7L6.500 17c-.3 1.500-1.500 2-3 1.500C1 17.500.5 12.500 1.200 9.500z" fill="#8fce4a" />
          <path d="M1.700 15h6l-1 3.500c-1 2-4 1-5-3.500z" fill="#f6c431" />
          <path d="M16 21H9c-2 0-2.500-1.500-3-3h3.500c2 0 3-1 3.500-3L15 7.500c.5-1.500 1.500-2 4-2 2 0 3.500 1.500 4 4 .3 2 .2 3.500-1 6.500-1 3.500-2.500 5-6 5z" fill="#f0607a" />
          <path d="M15 7.500c.5-1.500 1.500-2 4-2 2.500 0 4 2.500 4 5.500h-9z" fill="#b457d8" />
          <path d="M9 18c2 0 3.500-1 4-3h8c-1 4-2.500 6-5 6H9c-1.500 0-2.500-1.500-3-3z" fill="#fb8a62" />
        </svg>
      </App48>
      <App48 label="Edge">
        <svg width="24" height="24" viewBox="0 0 24 24">
          <circle cx="12" cy="12" r="12" fill="#1479cf" />
          <path d="M.2 10C2 3.500 7 0 12.500 0 19 0 24 5 24 10.500c0 4-3 6-6.500 6-2.500 0-4-1-4-2 0-.8 1-1 1-3 0-2.500-2.500-4.500-6-4.500C4.500 7 1.500 8.500.2 10z" fill="#35c1d8" />
          <path d="M15 0.500c5 1 9 5 9 10 0 4-3 6-6.500 6-2.500 0-4-1-4-2 0-.8 1-1 1-3 0-1.500-1-3-3-4z" fill="#5ccb75" opacity=".75" />
          <path d="M8.500 12C7 17 11 22 17 21.500c1.500 0 3-.5 4.500-1.500C17 26 6 25.500 4 17c-.5-3 2-6.500 5.500-7z" fill="#0c4f9e" />
        </svg>
      </App48>
      <App48 label="File Explorer" open="open">
        <svg width="22" height="18" viewBox="0 0 22 18">
          <path d="M0 1.500C0 .5.500 0 1.500 0H8l2 2.500h10.500c1 0 1.500.5 1.500 1.500v12H0z" fill="#e8a33d" />
          <path d="M0 4h22v12.500c0 1-.5 1.500-1.500 1.500h-19C.5 18 0 17.500 0 16.500z" fill="#ffd766" />
          <path d="M4 18v-6c0-1 .5-1.500 1.500-1.500h11c1 0 1.500.5 1.500 1.500v6h-4v-3H8v3z" fill="#2f8fdc" />
        </svg>
      </App48>
      <App48 label="Microsoft Store">
        <svg width="24" height="24" viewBox="0 0 24 24">
          <path d="M6.500 6V2.500C6.500 1.500 7 1 8 1h8c1 0 1.500.5 1.500 1.500V6" fill="none" stroke="#2ba8e0" strokeWidth="1.800" />
          <path d="M.5 5h23v16c0 1.500-1 2.500-2.500 2.500H3C1.500 23.500.5 22.500.5 21z" fill="#f3f3f3" />
          <path d="M7 9.500h4.500V14H7z" fill="#f25022" />
          <path d="M12.500 9.500H17V14h-4.500z" fill="#7fba00" />
          <path d="M7 15h4.500v4.500H7z" fill="#00a4ef" />
          <path d="M12.500 15H17v4.500h-4.500z" fill="#ffb900" />
        </svg>
      </App48>
      <App48 label="Outlook">
        <svg width="24" height="23" viewBox="0 0 24 23">
          <path d="m4 9 10-8 9.500 7v11c0 2-1 3-3 3H7c-2 0-3-1-3-3z" fill="#1b66c9" />
          <path d="m9 5 6-4 8 6-8 5z" fill="#4fb0f5" />
          <path d="m5 21 18.500-12v10c0 2-1 3-3 3H7z" fill="#3cc3f0" />
          <path d="M0 6.500C0 5.500.5 5 1.500 5h11c1 0 1.500.5 1.500 1.500v11c0 1-.5 1.500-1.500 1.500h-11C.5 19 0 18.500 0 17.500z" fill="#1065bd" />
          <circle cx="7" cy="12" r="3.300" fill="none" stroke="#fff" strokeWidth="2" />
        </svg>
      </App48>
      <App48 label="Firefox">
        <svg width="23" height="23" viewBox="0 0 23 23">
          <path d="M14.500 0c2 2 3 4 3.500 5.500 2 1 5 4 4.700 8C22.300 19 17.500 23 11.500 23S.3 18.500.3 12.500C.3 9 1.500 6 3 4.500c0 1 .3 1.500 1 2.500 1-1.500 3-2.500 5-2.500 2 .5 3.500-1 5.500-4.500z" fill="#ff7a2f" />
          <path d="M14.500 0c2 2 3 4 3.500 5.500 2 1 5 4 4.700 8-.2 2-1 4-2 5 .5-4-1-7-3.200-9C15 7 13.500 4 14.500 0z" fill="#ffd23e" />
          <path d="M.5 11c0 6 5 10 10.500 10 4 0 7-1.500 9-4-1.500 4-5 6-8.500 6C5 23-.5 18 .5 11z" fill="#e9295b" />
          <circle cx="11.500" cy="12.500" r="5" fill="#8b3fd0" />
          <path d="M5 8c3-1 5 .5 8 1-1 2-3 2-4 2.500-.5 2.500 1 3.500 3 3.500-3 2-7 0-7.500-3z" fill="#ff9b2e" />
        </svg>
      </App48>
      <App48 label="Chrome" open="open">
        <svg width="24" height="24" viewBox="0 0 24 24">
          <path d="M12 12 1.600 6A12 12 0 0 1 22.400 6z" fill="#e33b2e" />
          <path d="M12 12 22.400 6A12 12 0 0 1 12 24z" fill="#fbc116" />
          <path d="M12 12v12A12 12 0 0 1 1.600 6z" fill="#279847" />
          <path d="M12 6.500h10.700L17 15l-5 9z" fill="#fbc116" />
          <circle cx="12" cy="12" r="6" fill="#fff" />
          <circle cx="12" cy="12" r="4.700" fill="#3b82e8" />
        </svg>
      </App48>
      <App48 label="Excel" open="active">
        <svg width="24" height="22" viewBox="0 0 24 22">
          <path d="M6 0h17c.6 0 1 .4 1 1v20c0 .6-.4 1-1 1H7c-.6 0-1-.4-1-1z" fill="#185c37" />
          <path d="M6 0h9v7H6z" fill="#21a366" />
          <path d="M15 0h8c.6 0 1 .4 1 1v6h-9z" fill="#33c481" />
          <path d="M15 7h9v7h-9z" fill="#21a366" />
          <path d="M6 7h9v7H6zM15 14h9v7h-9z" fill="#107c41" />
          <path d="M0 5h12v12H0z" fill="#107c41" />
          <path d="m3.500 7.500 5 7M8.500 7.500l-5 7" stroke="#fff" strokeWidth="1.800" />
        </svg>
      </App48>

      <span className="ml-[88px] mb-1 text-[11px]">EN</span>

      <div className="ml-auto flex items-center">
        <button className="flex items-center text-[13px]">
          <svg width="25" height="24" viewBox="0 0 25 24" className="mr-2">
            <path d="M8 13c4 3 8 3 11-1 1 6-3 10-8 10-4 0-7-2-8-5 2 .5 5-1 5-4z" fill="#f59a23" />
            <path d="M3.500 9a3.200 3.200 0 0 1 0-5.500C5 0 9.500 0 11 3c2.500 0 4 4 1.500 6z" fill="#a9d4f7" />
            <path d="M13 21a3 3 0 0 1 0-5.500c1.500-3.500 6-3.500 7.500-.5C24 15 25 19 22.500 21z" fill="#b7dcfa" />
            <circle cx="18" cy="6" r="6" fill="#d5301d" />
            <text x="18" y="9" fontSize="8" fill="#fff" textAnchor="middle" fontFamily="Liberation Sans, sans-serif">
              1
            </text>
          </svg>
          <span>31°C</span>
          <span dir="rtl" className="ml-2.5 font-['Noto_Sans','DejaVu_Sans',sans-serif]">
            غائم جزئيًا
          </span>
        </button>
        <button aria-label="Hidden icons" className="ml-6">
          <svg width="12" height="8" viewBox="0 0 12 8" fill="none" stroke="#fff" strokeWidth="1.200">
            <path d="m.5 7 5.500-5.500L11.500 7" />
          </svg>
        </button>
        <svg width="13" height="16" viewBox="0 0 13 16" fill="none" stroke="#fff" className="ml-3">
          <rect x="1.500" y="4.500" width="7" height="7" rx="1" />
          <path d="m8.500 7 3-2v6l-3-2M2 1.500C4 .3 7 .3 9 1.500M2 14.500c2 1.200 5 1.200 7 0" />
        </svg>
        <svg width="16" height="11" viewBox="0 0 16 11" className="ml-2.5">
          <path d="M3.500 11A3 3 0 0 1 3 5c.5-3 3-5 5.500-4.500C10.500.7 12 2 12.500 4 15 4 16 6 16 7.500S15 11 13 11z" fill="#fff" />
          <path d="M1 6c2-2.500 5-1.500 7 .5l6 3.500c-.5.700-1 1-2 1h-9C0 11-.5 8 1 6z" fill="#c9c9c9" />
        </svg>
        <svg width="16" height="13" viewBox="0 0 16 13" fill="none" stroke="#fff" className="ml-2">
          <path d="M4 5.500V4h10.500v7.500h-9V10M15.500 6.500v2.500" />
          <path d="M7 6h6v4H7z" fill="#fff" stroke="none" />
          <path d="M1.500 0v2.500M3.500 0v2.500M.5 2.500h4v2a2 2 0 0 1-4 0zM2.500 6.500V9H5" />
        </svg>
        <svg width="13" height="13" viewBox="0 0 13 13" fill="none" stroke="#fff" className="ml-3">
          <path d="M.7 12.500A12 12 0 0 1 12.500.7" opacity=".6" />
          <path d="M3.700 12.500a9 9 0 0 1 8.800-8.800M6.700 12.500a6 6 0 0 1 5.800-5.800M9.500 12.500a3 3 0 0 1 3-3" />
          <circle cx="11.500" cy="11.500" r="1" fill="#fff" />
        </svg>
        <svg width="17" height="14" viewBox="0 0 17 14" fill="none" stroke="#fff" className="ml-2">
          <path d="M.5 5v4H3l3.500 3.500v-11L3 5zM9 5c1 1.200 1 2.800 0 4M11.500 3c2 2.200 2 5.800 0 8M13.500 1c3.300 3.300 3.300 8.700 0 12" />
        </svg>
        <div className="ml-2 w-[60px] text-center text-[11px] leading-[18px]">
          <div>09:15 PM</div>
          <div>07/16/2025</div>
        </div>
        <button aria-label="1 notification" className="ml-[17px] mr-3 relative">
          <svg width="25" height="24" viewBox="0 0 25 24">
            <path d="M0 0h16v13H7l-3 3v-3H0z" fill="#fff" />
            <path d="M3 3.500h10M3 6.500h10M3 9.500h7" stroke="#1a2540" />
            <circle cx="16" cy="16" r="7.500" fill="#3a424e" stroke="#7a828c" />
            <text x="16" y="20" fontSize="11" fontWeight="bold" fill="#fff" textAnchor="middle" fontFamily="Liberation Sans, sans-serif">
              1
            </text>
          </svg>
        </button>
      </div>
    </footer>
  );
}

function Watermark() {
  return (
    <div className="pointer-events-none absolute left-[598px] bottom-[18px] w-[166px] flex flex-col items-center text-[#bdbdbd] opacity-45 font-bold">
      <span dir="rtl" className="text-[46px] leading-[54px] [-webkit-text-stroke:3px_#bdbdbd] font-['DejaVu_Sans',sans-serif]">
        مستقل
      </span>
      <span className="text-[26px] leading-6">mostaql.com</span>
    </div>
  );
}

export default function App() {
  return (
    <div className="relative h-screen flex flex-col overflow-hidden bg-[#efefef] font-['Open_Sans','Noto_Sans',sans-serif]">
      <TitleBar />
      <MenuBar />
      <Ribbon />
      <FormulaBar />
      <Sheet />
      <SheetTabs />
      <StatusBar />
      <Taskbar />
      <Watermark />
    </div>
  );
}
